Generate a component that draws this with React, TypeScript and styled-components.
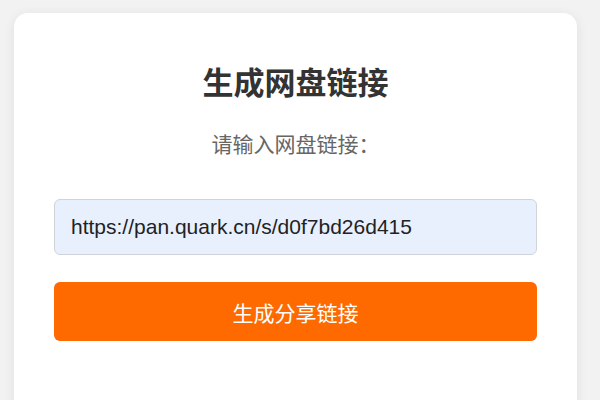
import styled, { createGlobalStyle } from "styled-components";

const GlobalStyle = createGlobalStyle`
  html, body {
    margin: 0;
    padding: 0;
    background: #f2f2f2;
    height: 100%;
    overflow: hidden;
  }
  body {
    font-family: "Liberation Sans", "Noto Sans CJK SC", sans-serif;
  }
`;

const Page = styled.div`
  padding: 13px 23px 0 14px;
`;

const Card = styled.div`
  background: #ffffff;
  border-radius: 14px;
  box-shadow: 0 2px 12px rgba(0, 0, 0, 0.08);
  padding: 49px 40px 80px;
  display: flex;
  flex-direction: column;
  align-items: stretch;
`;

const Title = styled.h2`
  margin: 0;
  text-align: center;
  font-size: 31px;
  line-height: 38px;
  font-weight: 700;
  color: #333333;
  font-family: "Noto Sans CJK SC", sans-serif;
`;

const Hint = styled.p`
  margin: 28px 0 0;
  text-align: center;
  font-size: 21px;
  line-height: 30px;
  color: #666666;
  font-family: "Noto Sans CJK SC", sans-serif;
`;

const LinkInput = styled.input`
  margin-top: 41px;
  box-sizing: border-box;
  height: 56px;
  width: 100%;
  padding: 0 16px;
  background: #e8f0fe;
  border: 1px solid #d0d4da;
  border-radius: 6px;
  font-size: 21px;
  color: #222222;
  font-family: "Liberation Sans", Arial, sans-serif;
  outline: none;
`;

const SubmitButton = styled.button`
  margin-top: 27px;
  height: 59px;
  width: 100%;
  border: none;
  border-radius: 6px;
  background: #ff6a00;
  color: #ffffff;
  font-size: 21px;
  font-family: "Noto Sans CJK SC", sans-serif;
  cursor: pointer;
`;

export default function App() {
  return (
    <>
      <GlobalStyle />
      <Page>
        <Card>
          <Title>生成网盘链接</Title>
          <Hint>请输入网盘链接：</Hint>
          <LinkInput defaultValue="https://pan.quark.cn/s/d0f7bd26d415" />
          <SubmitButton>生成分享链接</SubmitButton>
        </Card>
      </Page>
    </>
  );
}
